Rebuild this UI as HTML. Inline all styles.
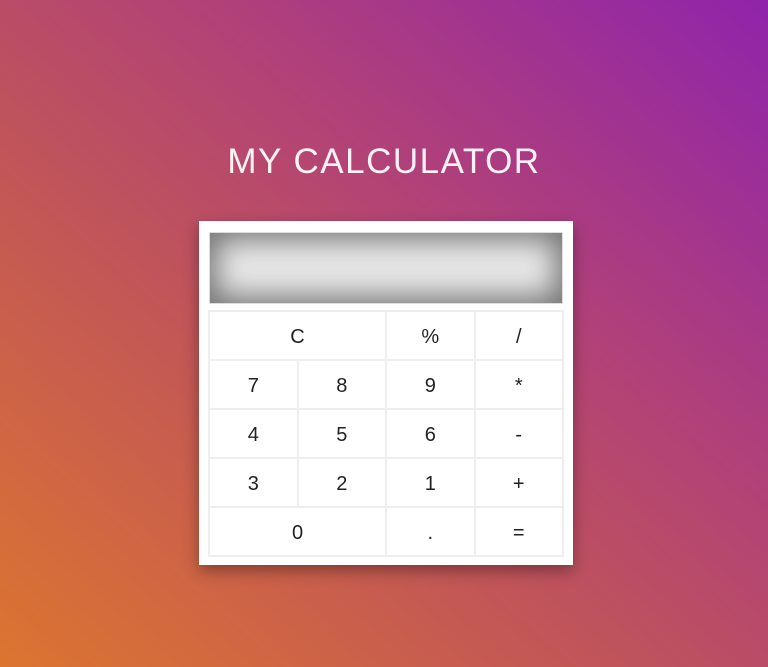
<!DOCTYPE html>
<html><head><style>
html,body{margin:0;width:768px;height:667px;overflow:hidden}
body{background:linear-gradient(to top right,#dc7530 0%,#c0545a 40%,#b0407a 65%,#8f24ab 100%);font-family:"Liberation Sans",sans-serif;position:relative}
h1{position:absolute;top:142px;left:0;width:768px;text-align:center;margin:0;font-weight:normal;font-size:35px;color:rgba(255,255,255,.93);letter-spacing:1.5px}
.card{position:absolute;left:199px;top:221px;width:374px;height:344px;background:#fff;box-shadow:0 6px 14px rgba(0,0,0,.35)}
.disp{position:absolute;left:10px;top:11px;width:354px;height:72px;background:#e8e8e8;box-shadow:inset 0 0 30px 6px #707070;border:1px solid #ddd;box-sizing:border-box}
table{position:absolute;left:9px;top:89px;border-collapse:collapse;width:356px}
td{border:2px solid #eee;height:44px;width:85px;text-align:center;font-size:20px;color:#222;padding:3px 0 0}
</style></head><body>
<h1>MY CALCULATOR</h1>
<div class="card"><div class="disp"></div>
<table>
<tr><td colspan="2">C</td><td>%</td><td>/</td></tr>
<tr><td>7</td><td>8</td><td>9</td><td>*</td></tr>
<tr><td>4</td><td>5</td><td>6</td><td>-</td></tr>
<tr><td>3</td><td>2</td><td>1</td><td>+</td></tr>
<tr><td colspan="2">0</td><td>.</td><td>=</td></tr>
</table></div>
</body></html>
